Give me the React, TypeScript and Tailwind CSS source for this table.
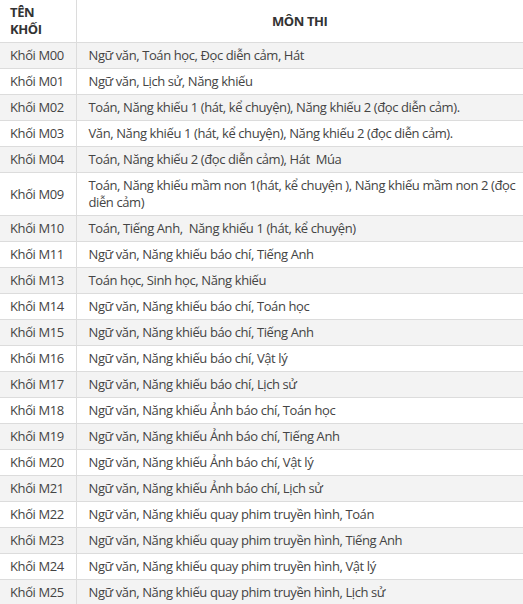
import React from 'react';

const rows: [string, string][] = [
  ['Khối M00', 'Ngữ văn, Toán học, Đọc diễn cảm, Hát'],
  ['Khối M01', 'Ngữ văn, Lịch sử, Năng khiếu'],
  ['Khối M02', 'Toán, Năng khiếu 1 (hát, kể chuyện), Năng khiếu 2 (đọc diễn cảm).'],
  ['Khối M03', 'Văn, Năng khiếu 1 (hát, kể chuyện), Năng khiếu 2 (đọc diễn cảm).'],
  ['Khối M04', 'Toán, Năng khiếu 2 (đọc diễn cảm), Hát  Múa'],
  ['Khối M09', 'Toán, Năng khiếu mầm non 1(hát, kể chuyện ), Năng khiếu mầm non 2 (đọc diễn cảm)'],
  ['Khối M10', 'Toán, Tiếng Anh,  Năng khiếu 1 (hát, kể chuyện)'],
  ['Khối M11', 'Ngữ văn, Năng khiếu báo chí, Tiếng Anh'],
  ['Khối M13', 'Toán học, Sinh học, Năng khiếu'],
  ['Khối M14', 'Ngữ văn, Năng khiếu báo chí, Toán học'],
  ['Khối M15', 'Ngữ văn, Năng khiếu báo chí, Tiếng Anh'],
  ['Khối M16', 'Ngữ văn, Năng khiếu báo chí, Vật lý'],
  ['Khối M17', 'Ngữ văn, Năng khiếu báo chí, Lịch sử'],
  ['Khối M18', 'Ngữ văn, Năng khiếu Ảnh báo chí, Toán học'],
  ['Khối M19', 'Ngữ văn, Năng khiếu Ảnh báo chí, Tiếng Anh'],
  ['Khối M20', 'Ngữ văn, Năng khiếu Ảnh báo chí, Vật lý'],
  ['Khối M21', 'Ngữ văn, Năng khiếu Ảnh báo chí, Lịch sử'],
  ['Khối M22', 'Ngữ văn, Năng khiếu quay phim truyền hình, Toán'],
  ['Khối M23', 'Ngữ văn, Năng khiếu quay phim truyền hình, Tiếng Anh'],
  ['Khối M24', 'Ngữ văn, Năng khiếu quay phim truyền hình, Vật lý'],
  ['Khối M25', 'Ngữ văn, Năng khiếu quay phim truyền hình, Lịch sử'],
];

export default function App() {
  return (
    <div className="w-[523px] h-[604px] overflow-hidden bg-white font-['Open_Sans',sans-serif] text-[13px] leading-[17px] tracking-[-0.4px] text-[#444]">
      <table className="w-full table-fixed border-collapse">
        <colgroup>
          <col className="w-[76px]" />
          <col />
        </colgroup>
        <thead>
          <tr className="border-b border-[#dcdcdc]">
            <th className="border-r border-[#dcdcdc] pl-[10px] pr-2 py-1 text-left font-bold text-[#333]">TÊN KHỐI</th>
            <th className="px-2 py-1 text-center font-bold text-[#333]">MÔN THI</th>
          </tr>
        </thead>
        <tbody>
          {rows.map(([khoi, mon], i) => (
            <tr key={khoi} className={`border-b border-[#dcdcdc] ${i % 2 === 0 ? 'bg-[#f3f3f3]' : 'bg-white'}`}>
              <td className="border-r border-[#dcdcdc] pl-[10px] pr-1 py-1 whitespace-nowrap">{khoi}</td>
              <td className="pl-3 pr-0 py-1 whitespace-pre-wrap">{mon}</td>
            </tr>
          ))}
        </tbody>
      </table>
    </div>
  );
}
